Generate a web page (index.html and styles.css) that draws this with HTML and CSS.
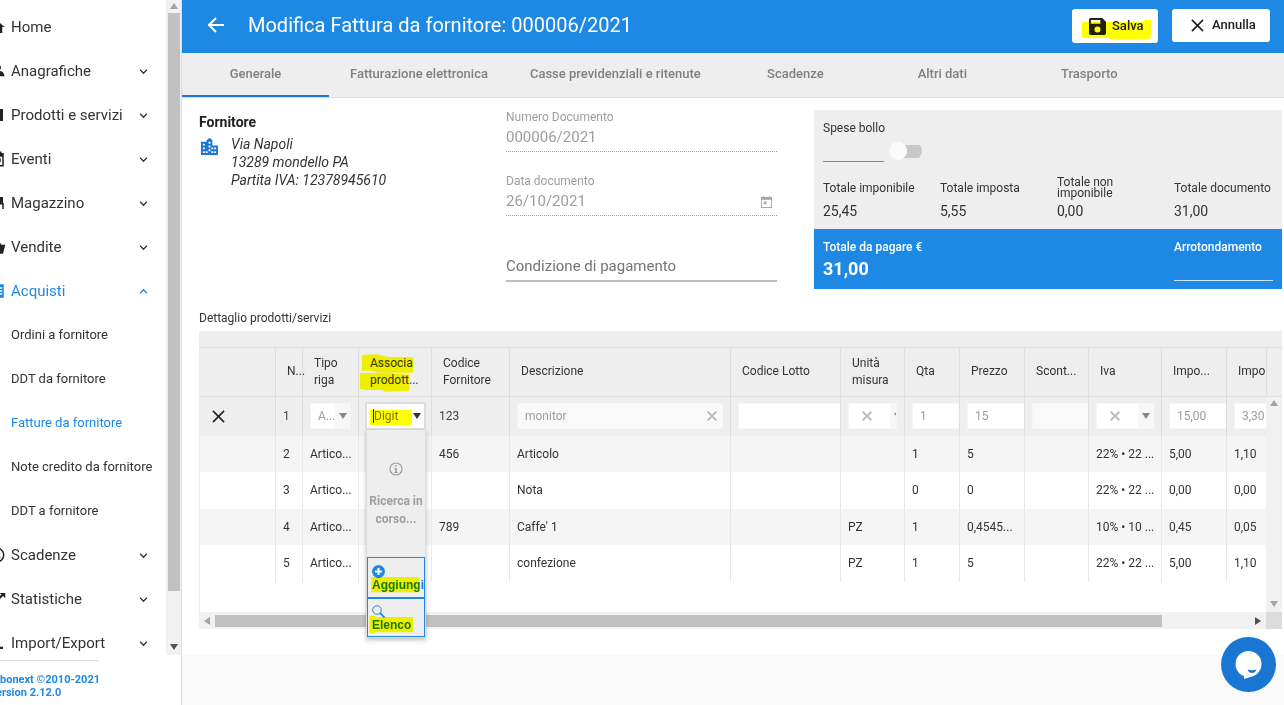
FILE: index.html
```html
<!DOCTYPE html>
<html lang="it">
<head>
<meta charset="utf-8">
<title>Modifica Fattura da fornitore</title>
<link rel="stylesheet" href="styles.css">
</head>
<body>
<svg class="defs" aria-hidden="true">
  <symbol id="down" viewBox="0 0 8 8"><path d="M1 2.5l3 3 3-3" fill="none" stroke="currentColor" stroke-width="1.2"/></symbol>
  <symbol id="up" viewBox="0 0 8 8"><path d="M1 5.5l3-3 3 3" fill="none" stroke="currentColor" stroke-width="1.2"/></symbol>
  <symbol id="cross" viewBox="0 0 14 14"><path d="M1 1l12 12M13 1L1 13" fill="none" stroke="currentColor" stroke-width="1.7"/></symbol>
  <symbol id="cross-bold" viewBox="0 0 14 14"><path d="M1 1l12 12M13 1L1 13" fill="none" stroke="currentColor" stroke-width="2.6"/></symbol>
  <symbol id="tri" viewBox="0 0 8 6"><path d="M0 0h8L4 6z" fill="currentColor"/></symbol>
</svg>
<div class="app">
  <aside class="sidebar">
    <div class="nav-area">
      <nav class="nav">
        <a class="item" href="#"><svg class="ico" viewBox="0 0 24 24"><path d="M10 20v-6h4v6h5v-8h3L12 3 2 12h3v8z"/></svg><span>Home</span></a>
        <a class="item" href="#"><svg class="ico" viewBox="0 0 24 24"><path d="M14 4a3.500 3.500 0 013 5 3.500 3.500 0 01-4 2zM14 13l3-1c3 1 5 4 5 7h-6c0-2-1-3-4-4z"/></svg><span>Anagrafiche</span><svg class="chev"><use href="#down"/></svg></a>
        <a class="item" href="#"><svg class="ico" viewBox="0 0 24 24"><path d="M4 4h16v16H4z"/></svg><span>Prodotti e servizi</span><svg class="chev"><use href="#down"/></svg></a>
        <a class="item" href="#"><svg class="ico" viewBox="0 0 24 24"><path d="M19 4h-1V2h-2v2H8V2H6v2H3v18h18V4zm0 16H5V9h14zM12 11h5v5h-5z"/></svg><span>Eventi</span><svg class="chev"><use href="#down"/></svg></a>
        <a class="item" href="#"><svg class="ico" viewBox="0 0 24 24"><path d="M3 4h17v8h1v8h-2v-6h-4v6H4v-8H2z"/></svg><span>Magazzino</span><svg class="chev"><use href="#down"/></svg></a>
        <a class="item" href="#"><svg class="ico" viewBox="0 0 24 24"><path d="M2 9h4l5-7 1 1-3 6h6l-3-6 1-1 5 7h5l-3 12H5z"/></svg><span>Vendite</span><svg class="chev"><use href="#down"/></svg></a>
        <a class="item active" href="#"><svg class="ico" viewBox="0 0 24 24"><path d="M3 3h18v18H3zm10 4v2h6V7zm0 4v2h6v-2zm0 4v2h6v-2z" fill-rule="evenodd"/></svg><span>Acquisti</span><svg class="chev"><use href="#up"/></svg></a>
        <a class="item sub" href="#">Ordini a fornitore</a>
        <a class="item sub" href="#">DDT da fornitore</a>
        <a class="item sub active" href="#">Fatture da fornitore</a>
        <a class="item sub" href="#">Note credito da fornitore</a>
        <a class="item sub" href="#">DDT a fornitore</a>
        <a class="item" href="#"><svg class="ico" viewBox="0 0 24 24"><path d="M12 2a10 10 0 100 20 10 10 0 000-20zm0 2a8 8 0 110 16 8 8 0 010-16zm-1 3v6l5 3 1-1-4-3V7z" fill-rule="evenodd"/></svg><span>Scadenze</span><svg class="chev"><use href="#down"/></svg></a>
        <a class="item" href="#"><svg class="ico" viewBox="0 0 24 24"><path d="M15 4l3 2-5 5-4-4-8 8 2 2 6-6 4 4 7-7 3 3V4z"/></svg><span>Statistiche</span><svg class="chev"><use href="#down"/></svg></a>
        <a class="item" href="#"><svg class="ico" viewBox="0 0 24 24"><path d="M9 3L5 7h3v7h2V7h3zm7 14v-7h-2v7h-3l5 3h4v-3z"/></svg><span>Import/Export</span><svg class="chev"><use href="#down"/></svg></a>
      </nav>
      <div class="vbar"><svg class="arrow up dim"><use href="#tri"/></svg><div class="thumb"></div><svg class="arrow end"><use href="#tri"/></svg></div>
    </div>
    <footer class="foot"><hr><p>bonext ©2010-2021</p><p class="ver">ersion 2.12.0</p></footer>
  </aside>

  <main class="main">
    <header class="top">
      <button class="back" aria-label="Indietro"><svg viewBox="0 0 16 16"><path d="M8 1L1 8l7 7M1 8h15" fill="none" stroke="#fff" stroke-width="2"/></svg></button>
      <h1>Modifica Fattura da fornitore: 000006/2021</h1>
      <button class="btn save"><svg class="floppy" viewBox="0 0 18 18"><path fill-rule="evenodd" d="M2 0h12l4 4v12a2 2 0 01-2 2H2a2 2 0 01-2-2V2a2 2 0 012-2zm0 2v4h10V2zm7 7a3.200 3.200 0 100 6.400A3.200 3.200 0 009 9z" fill="#212121"/></svg><span>Salva</span>
        <svg class="hl" viewBox="0 0 86 34"><path d="M10 13h62v-2h7v16l-2 3H37v-1H10z"/></svg></button>
      <button class="btn cancel"><svg class="x13"><use href="#cross"/></svg><span>Annulla</span></button>
    </header>
    <div class="tabs" role="tablist">
      <button class="tab on" role="tab" aria-selected="true">Generale</button>
      <button class="tab" role="tab">Fatturazione elettronica</button>
      <button class="tab" role="tab">Casse previdenziali e ritenute</button>
      <button class="tab" role="tab">Scadenze</button>
      <button class="tab" role="tab">Altri dati</button>
      <button class="tab" role="tab">Trasporto</button>
    </div>
    <div class="panel">
      <div class="info">
        <section class="supplier">
          <h2>Fornitore</h2>
          <div class="addr">
            <svg viewBox="0 0 18 18"><path fill="#1976d2" fill-rule="evenodd" d="M0 4h6V2l3-2 3 2v6h6v10H0zm2 2v2h2V6zm0 4v2h2v-2zm0 4v2h2v-2zm6-10v2h2V4zm0 4v2h2V8zm0 4v2h2v-2zm-3 2v2h2v-2zm6 0v2h2v-2zm0-4v2h2v-2zm3 0v2h2v-2zm0 4v2h2v-2z"/></svg>
            <address>Via Napoli<br>13289 mondello PA<br>Partita IVA: 12378945610</address>
          </div>
        </section>
        <section class="fields">
          <div class="field off"><label for="num">Numero Documento</label><input id="num" value="000006/2021" disabled></div>
          <div class="field off"><label for="dat">Data documento</label><div class="line"><input id="dat" value="26/10/2021" disabled><svg viewBox="0 0 12 13"><path fill="#a6a6a6" fill-rule="evenodd" d="M2 0h1v1h6V0h1v1h2v12H0V1h2zM1 4v8h10V4zm2 2h3v3H3z"/></svg></div></div>
          <div class="field pay"><input aria-label="Condizione di pagamento" placeholder="Condizione di pagamento"></div>
        </section>
        <section class="totals">
          <div class="grey">
            <label for="bollo">Spese bollo</label>
            <div class="stamp"><input id="bollo" class="amount"><input type="checkbox" class="switch" aria-label="Applica bollo"></div>
            <dl>
              <div><dt>Totale imponibile</dt><dd>25,45</dd></div>
              <div><dt>Totale imposta</dt><dd>5,55</dd></div>
              <div><dt>Totale non imponibile</dt><dd>0,00</dd></div>
              <div><dt>Totale documento</dt><dd>31,00</dd></div>
            </dl>
          </div>
          <div class="blue">
            <div class="due"><span>Totale da pagare €</span><strong>31,00</strong></div>
            <div class="round"><label for="arr">Arrotondamento</label><input id="arr"></div>
          </div>
        </section>
      </div>

      <h3>Dettaglio prodotti/servizi</h3>
      <div class="grid">
        <div class="band"></div>
        <div class="view">
          <div class="clip">
          <table>
            <colgroup><col class="w76"><col class="w27"><col class="w56"><col class="w73"><col class="w78"><col class="w221"><col class="w110"><col class="w64"><col class="w55"><col class="w65"><col class="w64"><col class="w73"><col class="w65"><col class="w39"></colgroup>
            <thead><tr><th></th><th>N...</th><th>Tipo<br>riga</th><th class="rel">Associa<br>prodott...<svg class="hl" viewBox="0 0 219 144"><path d="M9 20l43-2 38 8 75 1v47H60l-25-6H9zM3 75h87l63 5v49l-73 3-10-5H20l-17-4z"/></svg></th><th>Codice<br>Fornitore</th><th>Descrizione</th><th>Codice Lotto</th><th>Unità<br>misura</th><th>Qta</th><th>Prezzo</th><th>Scont...</th><th>Iva</th><th>Impo...</th><th class="last">Impo</th></tr></thead>
            <tbody>
              <tr class="edit">
                <td><button class="del" aria-label="Elimina riga"><svg><use href="#cross"/></svg></button></td>
                <td>1</td>
                <td><div class="combo"><input aria-label="Tipo riga" value="A..."><button aria-label="Apri"><svg class="t"><use href="#tri"/></svg></button></div></td>
                <td class="tight"><div class="combo focus"><i class="caret"></i><input aria-label="Associa prodotto" placeholder="Digit"><button aria-label="Apri"><svg class="t"><use href="#tri"/></svg></button><svg class="hl" viewBox="0 0 57 24"><path d="M3 6h42v15H3z"/></svg></div></td>
                <td>123</td>
                <td><div class="box pale"><input aria-label="Descrizione" value="monitor"><svg class="clr"><use href="#cross-bold"/></svg></div></td>
                <td class="flush"><div class="box"><input aria-label="Codice Lotto"></div></td>
                <td><div class="combo clear cut"><svg class="clr"><use href="#cross-bold"/></svg><button aria-label="Apri"><svg class="t"><use href="#tri"/></svg></button></div></td>
                <td class="flush"><div class="box"><input aria-label="Qta" value="1"></div></td>
                <td class="flush"><div class="box"><input aria-label="Prezzo" value="15"></div></td>
                <td class="flush"><div class="box pale"><input aria-label="Sconto"></div></td>
                <td><div class="combo clear"><svg class="clr"><use href="#cross-bold"/></svg><button aria-label="Apri"><svg class="t"><use href="#tri"/></svg></button></div></td>
                <td class="flush"><div class="box"><input aria-label="Importo" value="15,00"></div></td>
                <td class="flush last"><div class="box"><input aria-label="Imposta" value="3,30"></div></td>
              </tr>
              <tr><td></td><td>2</td><td>Artico...</td><td></td><td>456</td><td>Articolo</td><td></td><td></td><td>1</td><td>5</td><td></td><td>22% • 22 ...</td><td>5,00</td><td class="last">1,10</td></tr>
              <tr><td></td><td>3</td><td>Artico...</td><td></td><td></td><td>Nota</td><td></td><td></td><td>0</td><td>0</td><td></td><td>22% • 22 ...</td><td>0,00</td><td class="last">0,00</td></tr>
              <tr><td></td><td>4</td><td>Artico...</td><td></td><td>789</td><td>Caffe' 1</td><td></td><td>PZ</td><td>1</td><td>0,4545...</td><td></td><td>10% • 10 ...</td><td>0,45</td><td class="last">0,05</td></tr>
              <tr><td></td><td>5</td><td>Artico...</td><td></td><td></td><td>confezione</td><td></td><td>PZ</td><td>1</td><td>5</td><td></td><td>22% • 22 ...</td><td>5,00</td><td class="last">1,10</td></tr>
            </tbody>
          </table>
          </div>
          <div class="side"><div class="sidehead"></div><div class="track"><svg class="arrow up dim"><use href="#tri"/></svg><svg class="arrow end dim"><use href="#tri"/></svg></div></div>
        </div>
        <div class="hbar"><svg class="arrow left dim"><use href="#tri"/></svg><div class="hthumb"></div><svg class="arrow right"><use href="#tri"/></svg><div class="corner"></div></div>
        <div class="popup">
          <div class="wait"><svg viewBox="0 0 14 14"><circle cx="7" cy="7" r="6" fill="none" stroke="#9e9e9e" stroke-width="1.200"/><path d="M6.200 3h1.600v1.600H6.200zM5.500 6h2.300v4h1v1H5.200v-1h1V7h-.7z" fill="#9e9e9e"/></svg><p>Ricerca in corso...</p></div>
          <button><svg viewBox="0 0 13 13"><circle cx="6.500" cy="6.500" r="6.500" fill="#1e88e5"/><path d="M6.500 3v7M3 6.500h7" stroke="#fff" stroke-width="2"/></svg><span>Aggiungi</span><svg class="hl" viewBox="0 0 58 41"><path d="M3 20h50v16H3z"/></svg></button>
          <button><svg viewBox="0 0 13 13"><circle cx="5" cy="5" r="4.300" fill="none" stroke="#1e88e5"/><path d="M8 8l4.500 4.500" stroke="#1e88e5" stroke-width="1.800"/></svg><span>Elenco</span><svg class="hl" viewBox="0 0 58 39"><path d="M1 18h6v1h40v16H7v1H1z"/></svg></button>
        </div>
      </div>
    </div>
    <button class="chat" aria-label="Chat"><svg viewBox="0 0 55 55"><circle cx="27.500" cy="27" r="13" fill="#fff"/><path fill="#fff" d="M23 36v6q9-2 13-7z"/><path d="M26.500 32.500q5 1.500 9 0-1.500 3.500-4.500 3.500t-4.500-3.500z" fill="#1976d2"/></svg></button>
  </main>
</div>
</body>
</html>
```
FILE: styles.css
```css
* { box-sizing: border-box; }
body { margin: 0; font-family: Roboto, "Liberation Sans", sans-serif; font-size: 12px; color: #333; background: #fafafa; }
button, input { font: inherit; color: inherit; border: 0; padding: 0; margin: 0; background: none; min-width: 0; border-radius: 0; outline: 0; }
h1, h2, h3, p, dl, dd { margin: 0; }
.defs { position: absolute; width: 0; height: 0; }
.app { display: flex; height: 100vh; overflow: hidden; }

.sidebar { width: 182px; flex: none; display: flex; flex-direction: column; background: #fff; border-right: 1px solid #ddd; }
.nav-area { flex: 1; min-height: 0; display: flex; overflow: hidden; }
.nav { flex: 1; min-width: 0; padding-top: 5px; overflow: hidden; }
.item { display: flex; align-items: center; height: 44px; padding-right: 18px; color: #333; font-size: 15px; text-decoration: none; white-space: nowrap; }
.item span { flex: 1; }
.item.sub { padding: 0 0 2px 11px; font-size: 13px; }
.item.active { color: #1e88e5; }
.ico { width: 18px; height: 18px; margin-left: -12px; margin-right: 5px; flex: none; fill: #212121; }
.active .ico { fill: #1e88e5; }
.chev { width: 9px; height: 9px; }
.vbar { width: 15px; display: flex; flex-direction: column; align-items: center; background: #f1f1f1; }
.thumb { width: 12px; flex: 1; margin: 4px 0 53px; background: #c1c1c1; }
.arrow { width: 8px; height: 6px; flex: none; color: #505050; }
.arrow.dim { color: #a3a3a3; }
.arrow.up { transform: rotate(180deg); margin-top: 3px; }
.arrow.end { margin-bottom: 5px; }
.arrow.left { transform: rotate(90deg); }
.arrow.right { transform: rotate(-90deg); }
.foot { height: 50px; padding-top: 5px; overflow: hidden; color: #1e88e5; font-size: 11px; font-weight: 700; line-height: 13px; }
.foot hr { width: 99px; margin: 0 0 12px; border: 0; border-top: 1px solid #ddd; }
.ver { margin-left: -4px; }

.main { flex: 1; min-width: 0; display: flex; flex-direction: column; }
.top { display: flex; align-items: flex-start; height: 53px; padding: 9px 14px 0 26px; background: #1e88e5; color: #fff; }
.back { width: 16px; height: 32px; }
.back svg { width: 16px; height: 16px; display: block; }
h1 { flex: 1; padding-left: 24px; font-size: 20px; font-weight: 400; line-height: 32px; }
.btn { position: relative; display: flex; align-items: center; height: 33px; border-radius: 3px; background: #fff; color: #212121; font-size: 13px; font-weight: 500; }
.btn span { padding-bottom: 2px; }
.save { width: 86px; height: 34px; padding-left: 17px; gap: 6px; margin-right: 14px; }
.cancel { width: 98px; padding-left: 19px; gap: 8px; }
.floppy { width: 17px; height: 17px; }
.x13 { width: 13px; height: 13px; }
.hl { position: absolute; inset: 0; width: 100%; height: 100%; fill: #ff0; mix-blend-mode: multiply; pointer-events: none; }
.tabs { display: flex; height: 45px; background: #eee; border-bottom: 1px solid #ddd; }
.tab { min-width: 147px; padding: 0 21px 4px; color: #808080; font-size: 13px; font-weight: 500; white-space: nowrap; }
.tab.on { border-bottom: 2px solid #1976d2; padding-bottom: 2px; }

.panel { flex: 1; margin-bottom: 50px; padding: 11px 2px 0 17px; background: #fff; min-height: 0; }
.info { display: grid; grid-template-columns: 307fr 308fr 468fr; }
h2 { padding-top: 4px; font-size: 14px; font-weight: 700; line-height: 18px; color: #212121; }
.addr { display: flex; gap: 13px; padding: 4px 0 0 2px; }
.addr svg { width: 17px; height: 17px; margin-top: 3px; }
address { font-size: 14px; line-height: 18px; }
.fields { display: flex; flex-direction: column; gap: 21px; padding-right: 37px; }
.field { display: flex; flex-direction: column; padding-bottom: 2px; border-bottom: 1px dotted #9e9e9e; color: #9e9e9e; }
.field label { line-height: 16px; }
.field input { height: 24px; font-size: 15px; flex: 1 1 24px; }
.line { display: flex; align-items: center; padding-right: 5px; }
.line svg { width: 11px; height: 12px; margin-top: 2px; }
.pay { padding-top: 17px; border-bottom: 2px solid #bdbdbd; }
.pay input::placeholder { color: #757575; opacity: 1; }
.totals { margin-top: 1px; }
.grey { padding: 11px 0 9px 9px; background: #eee; }
.grey > label { display: block; line-height: 14px; }
.stamp { display: flex; align-items: flex-end; gap: 5px; height: 27px; }
.amount { width: 61px; height: 26px; border-bottom: 1px solid #888; }
.switch { appearance: none; width: 33px; height: 18px; margin-bottom: 2px; background: radial-gradient(circle at 9px 9px, #fafafa 9px, transparent 9px), linear-gradient(#c8c8c8, #c8c8c8) 10px 3px / 23px 13px no-repeat; border-radius: 9px; }
dl { display: grid; grid-template-columns: repeat(4, 1fr); margin-right: -9px; padding-top: 14px; }
dl div:last-child { margin-right: 9px; }
dt { display: flex; align-items: center; height: 24px; width: 99px; line-height: 11px; }
dd { padding-top: 2px; font-size: 14px; line-height: 18px; }
.blue { display: flex; justify-content: space-between; height: 60px; padding: 10px 9px 0; background: #1e88e5; color: #fff; font-weight: 500; line-height: 16px; }
.due, .round { display: flex; flex-direction: column; }
.due strong { font-size: 18px; line-height: 28px; }
.round { width: 99px; }
.round input { height: 26px; border-bottom: 1px solid #cfe5fa; }
h3 { margin-top: 21px; font-size: 12px; font-weight: 400; line-height: 17px; padding-bottom: 4px; }

.grid { position: relative; }
.band { height: 17px; background: #eee; border-bottom: 1px solid #ddd; }
.view { display: flex; height: 264px; }
.clip { flex: 1; min-width: 0; overflow: hidden; border-left: 1px solid #eee; }
table { width: 100%; table-layout: fixed; border-collapse: separate; border-spacing: 0; }
.w27 { width: 27px; } .w39 { width: 39px; } .w55 { width: 55px; } .w56 { width: 56px; } .w64 { width: 64px; } .w65 { width: 65px; } .w73 { width: 73px; } .w76 { width: 76px; } .w78 { width: 78px; } .w110 { width: 110px; } .w221 { width: 221px; }
th { height: 49px; padding: 0 0 1px 11px; background: #eee; border-right: 1px solid #ddd; border-bottom: 1px solid #ddd; font-weight: 400; line-height: 17px; text-align: left; white-space: nowrap; }
th.last, td.last { border-right: 0; }
.rel { position: relative; }
td { height: 37px; padding: 0 7px 1px; border-right: 1px solid #e8e8e8; overflow: hidden; white-space: nowrap; line-height: 16px; }
tr:nth-child(even) td { height: 36px; background: #f5f5f5; }
.edit td { height: 39px; background: #eee; border-color: #ddd; color: #444; }
td.last { padding-right: 0; }
td.flush { padding-right: 0; }
td.tight { padding: 0 5px 1px 6px; }
.del { display: block; margin-left: 5px; color: #212121; }
.del svg { width: 13px; height: 13px; display: block; }
.box, .combo { position: relative; display: flex; align-items: center; height: 26px; background: #fff; color: #9e9e9e; border: 1px solid #f5f5f5; }
.box { padding-left: 7px; border-right: 0; }
.box input { flex: 1; width: 100%; }
.pale { background: #f9f9f9; }
.clr { width: 10px; height: 10px; margin-right: 6px; color: #b8b8b8; flex: none; }
.combo input { flex: 1; width: 10px; padding-left: 7px; }
.combo button { display: flex; align-items: center; justify-content: center; width: 15px; height: 24px; flex: none; background: #f7f7f7; color: #888; }
.t { width: 8px; height: 6px; flex: none; }
.clear { justify-content: space-between; padding-left: 13px; }
.cut button { width: 6px; overflow: hidden; justify-content: flex-start; }
.cut .t { margin-left: 4px; }
.focus { height: 28px; border: 2px solid #ddd; border-radius: 2px; }
.focus input { padding-left: 0; margin-right: 12px; }
.focus button { margin-left: -7px; }
.focus input::placeholder { color: #777; opacity: 1; }
.focus button { background: #fff; color: #333; }
.caret { width: 1px; height: 14px; margin-left: 6px; background: #222; flex: none; }
.side { width: 16px; display: flex; flex-direction: column; }
.sidehead { height: 49px; background: #eee; border-bottom: 1px solid #ddd; border-left: 1px solid #ddd; }
.track { flex: 1; display: flex; flex-direction: column; justify-content: space-between; align-items: center; background: #f1f1f1; }
.hbar { display: flex; align-items: center; height: 17px; padding-left: 4px; background: #f1f1f1; }
.hthumb { flex: 1; height: 12px; margin: 0 92px 0 4px; background: #c1c1c1; }
.corner { width: 16px; height: 17px; margin-left: 4px; background: #dcdcdc; }
.popup { position: absolute; left: 167px; top: 99px; width: 60px; background: #eee; border: 1px solid #ddd; border-top: 0; box-shadow: 0 2px 4px rgba(0,0,0,.25); }
.wait { height: 127px; padding-top: 32px; color: #9e9e9e; font-weight: 700; line-height: 18px; text-align: center; }
.wait svg { width: 14px; height: 14px; display: block; margin: 0 auto 16px; }
.popup button { position: relative; display: flex; flex-direction: column; justify-content: center; align-items: flex-start; width: 100%; height: 41px; padding: 2px 0 0 4px; border: 1px solid #1e88e5; color: #1976d2; font-family: "Liberation Sans", sans-serif; font-weight: 700; line-height: 15px; }
.popup button + button { height: 39px; }
.popup button svg:first-child { width: 13px; height: 13px; }
.chat { position: fixed; right: 8px; bottom: 13px; width: 55px; height: 55px; border-radius: 50%; background: #1976d2; }
.chat svg { width: 55px; height: 55px; display: block; }
```
